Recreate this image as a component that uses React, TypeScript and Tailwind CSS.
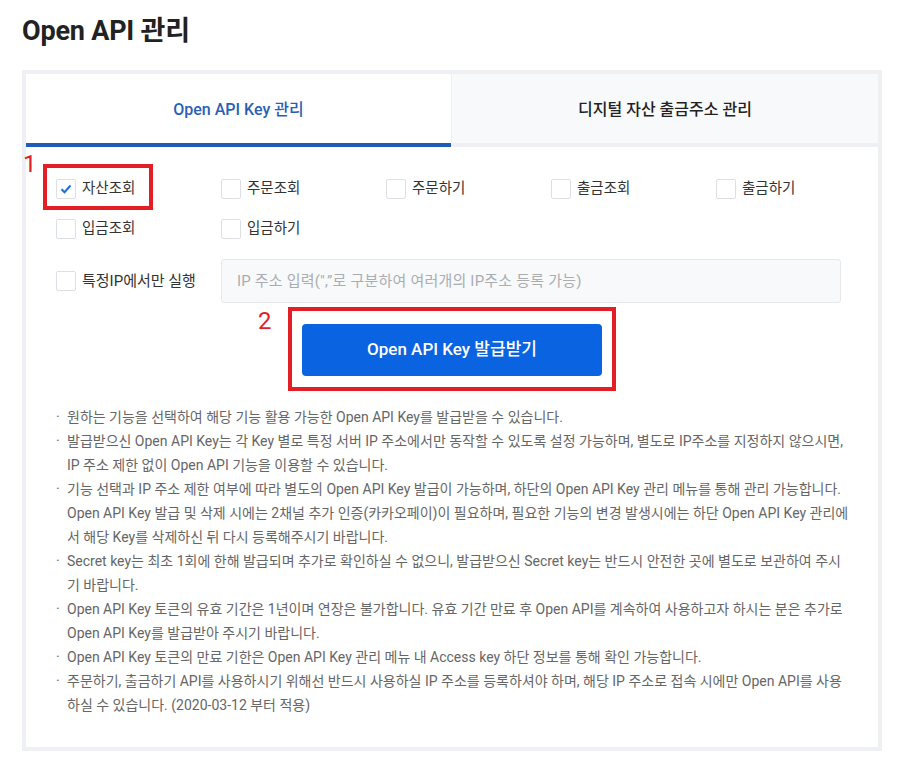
import React from "react";

const font = { fontFamily: 'Roboto, "Noto Sans CJK KR", "Noto Sans", sans-serif' };

function Box({ checked }: { checked?: boolean }) {
  return (
    <span className="flex h-[20px] w-[20px] shrink-0 items-center justify-center rounded-[2px] border border-[#dcdfe4] bg-white">
      {checked && (
        <svg width="12" height="10" viewBox="0 0 12 10" fill="none">
          <path d="M1.5 5.2 L4.5 8.2 L10.5 1.5" stroke="#1c6fde" strokeWidth="2" />
        </svg>
      )}
    </span>
  );
}

function Check({ label, checked }: { label: string; checked?: boolean }) {
  return (
    <div className="flex h-[20px] w-[165px] shrink-0 items-center gap-[6px] text-[14.5px] text-[#333]">
      <Box checked={checked} />
      <span>{label}</span>
    </div>
  );
}

const notes: string[][] = [
  ["원하는 기능을 선택하여 해당 기능 활용 가능한 Open API Key를 발급받을 수 있습니다."],
  [
    "발급받으신 Open API Key는 각 Key 별로 특정 서버 IP 주소에서만 동작할 수 있도록 설정 가능하며, 별도로 IP주소를 지정하지 않으시면,",
    "IP 주소 제한 없이 Open API 기능을 이용할 수 있습니다.",
  ],
  [
    "기능 선택과 IP 주소 제한 여부에 따라 별도의 Open API Key 발급이 가능하며, 하단의 Open API Key 관리 메뉴를 통해 관리 가능합니다.",
    "Open API Key 발급 및 삭제 시에는 2채널 추가 인증(카카오페이)이 필요하며, 필요한 기능의 변경 발생시에는 하단 Open API Key 관리에",
    "서 해당 Key를 삭제하신 뒤 다시 등록해주시기 바랍니다.",
  ],
  [
    "Secret key는 최초 1회에 한해 발급되며 추가로 확인하실 수 없으니, 발급받으신 Secret key는 반드시 안전한 곳에 별도로 보관하여 주시",
    "기 바랍니다.",
  ],
  [
    "Open API Key 토큰의 유효 기간은 1년이며 연장은 불가합니다. 유효 기간 만료 후 Open API를 계속하여 사용하고자 하시는 분은 추가로",
    "Open API Key를 발급받아 주시기 바랍니다.",
  ],
  ["Open API Key 토큰의 만료 기한은 Open API Key 관리 메뉴 내 Access key 하단 정보를 통해 확인 가능합니다."],
  [
    "주문하기, 출금하기 API를 사용하시기 위해선 반드시 사용하실 IP 주소를 등록하셔야 하며, 해당 IP 주소로 접속 시에만 Open API를 사용",
    "하실 수 있습니다. (2020-03-12 부터 적용)",
  ],
];

export default function App() {
  return (
    <div className="min-h-[769px] w-[924px] bg-white px-[22px] pt-[14px]" style={font}>
      <h1 className="text-[27px] font-bold leading-[34px] tracking-[-0.2px] text-[#222]">Open API 관리</h1>
      <div className="mt-[22px] w-[860px] border-[4px] border-[#eef0f3] bg-white">
        <div className="flex h-[73px]">
          <div className="flex w-[425px] items-center justify-center border-b-[4px] border-[#1f5cb9] bg-white pt-[2px] text-[16px] font-medium text-[#2a5fb8]">
            Open API Key 관리
          </div>
          <div className="flex flex-1 items-center justify-center border-b-[4px] border-l border-[#eef0f3] bg-[#f8f9fb] pt-[2px] text-[16px] font-medium text-[#222]">
            디지털 자산 출금주소 관리
          </div>
        </div>
        <div className="relative px-[30px] pb-[30px] pt-[32px]">
          <span className="absolute left-[-3px] top-[2px] text-[24px] leading-[30px] text-[#e31e24]">1</span>
          <span className="absolute left-[17px] top-[17px] h-[46px] w-[110px] border-[4px] border-[#e31e24]" />
          <div className="flex flex-col gap-[20px]">
            <div className="flex">
              <Check label="자산조회" checked />
              <Check label="주문조회" />
              <Check label="주문하기" />
              <Check label="출금조회" />
              <Check label="출금하기" />
            </div>
            <div className="flex">
              <Check label="입금조회" />
              <Check label="입금하기" />
            </div>
          </div>
          <div className="mt-[20px] flex items-center">
            <div className="flex h-[44px] w-[165px] shrink-0 items-center gap-[6px] text-[15px] text-[#333]">
              <Box />
              <span>특정IP에서만 실행</span>
            </div>
            <div className="flex h-[44px] w-[620px] shrink-0 items-center rounded-[3px] border border-[#e6e8eb] bg-[#f8f9fa] px-[15px] text-[15px] tracking-[0.2px] text-[#a9adb3]">
              IP 주소 입력(",”로 구분하여 여러개의 IP주소 등록 가능)
            </div>
          </div>
          <div className="relative mt-[21px] flex justify-center">
            <span className="absolute left-[202px] top-[-18px] text-[24px] leading-[30px] text-[#e31e24]">2</span>
            <div className="mt-[-17px] mb-[-15px] border-[4px] border-[#e31e24] px-[10px] pt-[13px] pb-[11px]">
              <button className="flex h-[52px] w-[300px] items-center justify-center rounded-[4px] bg-[#0a63e0] text-[17px] font-medium text-white">
                Open API Key 발급받기
              </button>
            </div>
          </div>
          <ul className="mt-[29px] text-[14px] leading-[24px] text-[#666]">
            {notes.map((lines, i) => (
              <li key={i} className="flex">
                <span className="w-[11px] shrink-0">·</span>
                <div>
                  {lines.map((l, j) => (
                    <div key={j} className="whitespace-nowrap">
                      {l}
                    </div>
                  ))}
                </div>
              </li>
            ))}
          </ul>
        </div>
      </div>
    </div>
  );
}
